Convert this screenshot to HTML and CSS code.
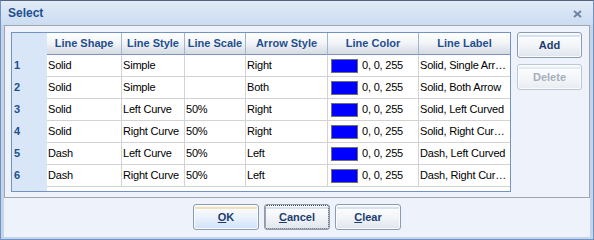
FILE: index.html
```html
<!DOCTYPE html>
<html lang="en">

<head>
  <meta charset="UTF-8">
  <title>Select</title>
  <link rel="stylesheet" href="styles.css">
</head>

<body>

  <div class="window">
    <div class="titlebar">
      <span class="title">Select</span>
      <span class="close">
        <svg width="9" height="8" viewBox="0 0 9 8">
          <path d="M1 1 L8 7 M8 1 L1 7" stroke="#6f84a3" stroke-width="2" fill="none" />
        </svg>
      </span>
    </div>

    <div class="frame">
      <div class="panel">
        <div class="grid">
          <div class="row head">
            <div class="cell num"></div>
            <div class="cell">Line Shape</div>
            <div class="cell">Line Style</div>
            <div class="cell">Line Scale</div>
            <div class="cell">Arrow Style</div>
            <div class="cell">Line Color</div>
            <div class="cell">Line Label</div>
          </div>
          <div class="row">
            <div class="cell num">1</div>
            <div class="cell">Solid</div>
            <div class="cell">Simple</div>
            <div class="cell"></div>
            <div class="cell">Right</div>
            <div class="cell color"><span class="swatch"></span>0, 0, 255</div>
            <div class="cell label">Solid, Single Arrow</div>
          </div>
          <div class="row">
            <div class="cell num">2</div>
            <div class="cell">Solid</div>
            <div class="cell">Simple</div>
            <div class="cell"></div>
            <div class="cell">Both</div>
            <div class="cell color"><span class="swatch"></span>0, 0, 255</div>
            <div class="cell label">Solid, Both Arrow</div>
          </div>
          <div class="row">
            <div class="cell num">3</div>
            <div class="cell">Solid</div>
            <div class="cell">Left Curve</div>
            <div class="cell">50%</div>
            <div class="cell">Right</div>
            <div class="cell color"><span class="swatch"></span>0, 0, 255</div>
            <div class="cell label">Solid, Left Curved</div>
          </div>
          <div class="row">
            <div class="cell num">4</div>
            <div class="cell">Solid</div>
            <div class="cell">Right Curve</div>
            <div class="cell">50%</div>
            <div class="cell">Right</div>
            <div class="cell color"><span class="swatch"></span>0, 0, 255</div>
            <div class="cell label">Solid, Right Curved</div>
          </div>
          <div class="row">
            <div class="cell num">5</div>
            <div class="cell">Dash</div>
            <div class="cell">Left Curve</div>
            <div class="cell">50%</div>
            <div class="cell">Left</div>
            <div class="cell color"><span class="swatch"></span>0, 0, 255</div>
            <div class="cell label">Dash, Left Curved</div>
          </div>
          <div class="row">
            <div class="cell num">6</div>
            <div class="cell">Dash</div>
            <div class="cell">Right Curve</div>
            <div class="cell">50%</div>
            <div class="cell">Left</div>
            <div class="cell color"><span class="swatch"></span>0, 0, 255</div>
            <div class="cell label">Dash, Right Curved</div>
          </div>
        </div>

        <div class="side">
          <button class="btn">Add</button>
          <button class="btn" disabled>Delete</button>
        </div>
      </div>

      <div class="footer">
        <button class="btn default"><u>O</u>K</button>
        <button class="btn focus"><u>C</u>ancel</button>
        <button class="btn"><u>C</u>lear</button>
      </div>
    </div>
  </div>

</body>
</html>
```

FILE: styles.css
```css
body {
  margin: 0;
  font-family: 'Liberation Sans', Arial, sans-serif;
  font-size: 11px;
  background-color: #fff;
}

.window {
  width: 594px;
  height: 240px;
  box-sizing: border-box;
  border: 1px solid #7192c2;
  border-top-color: #56627a;
  background-color: #c3d5ed;
}

.titlebar {
  height: 24px;
  display: flex;
  align-items: center;
  justify-content: space-between;
  padding: 0 11px 0 7px;
  background: linear-gradient(#e2ebf7, #d6e3f4 50%, #cbdcf2);
}

.title {
  font-size: 12px;
  font-weight: bold;
  color: #1f4f8f;
}

.close {
  display: flex;
  margin-top: 2px;
}

.frame {
  padding: 0 3px 2px;
}

.panel {
  height: 173px;
  box-sizing: border-box;
  display: flex;
  gap: 6px;
  padding: 6px 7px 5px 6px;
  border: 1px solid #a3a7ad;
  background-color: #eef3fb;
}

.grid {
  width: 500px;
  height: 160px;
  box-sizing: border-box;
  border: 1px solid #7393c2;
  background: linear-gradient(to right, #d8e6f8 35px, #fff 35px);
}

.row {
  display: grid;
  grid-template-columns: 35px 75px 63px 61px 82px 91px 91px;
  height: 22px;
}

.cell {
  box-sizing: border-box;
  height: 22px;
  line-height: 21px;
  padding: 0 1px;
  letter-spacing: -0.2px;
  white-space: nowrap;
  overflow: hidden;
  text-overflow: ellipsis;
  color: #000;
  border-right: 1px solid #d3d3d3;
  border-bottom: 1px solid #d3d3d3;
}

.cell:last-child {
  border-right: none;
}

.cell.label {
  padding-right: 3px;
}

.cell.num {
  border: none;
  font-weight: bold;
  letter-spacing: 0;
  color: #1f4f8f;
  padding-left: 2px;
}

.head .cell {
  font-weight: bold;
  letter-spacing: 0;
  color: #1f4f8f;
  text-align: center;
  background: linear-gradient(#fff, #f3f5f8 45%, #d5dbe3);
  border-right-color: #a2b6d3;
  border-bottom-color: #7c96bd;
}

.head .cell.num {
  background: none;
}

.head .cell:last-child {
  border-right: none;
}

.cell.color {
  display: flex;
  align-items: center;
  gap: 4px;
  padding-left: 3px;
}

.swatch {
  width: 27px;
  height: 14px;
  box-sizing: border-box;
  border: 1px solid #707070;
  background-color: #0000ff;
  flex-shrink: 0;
}

.side {
  display: flex;
  flex-direction: column;
  gap: 6px;
}

.btn {
  width: 65px;
  height: 26px;
  padding: 0;
  font-family: 'Liberation Sans', Arial, sans-serif;
  font-size: 11px;
  font-weight: bold;
  color: #1c3d6e;
  border: 1px solid #8c9bb0;
  border-radius: 3px;
  box-shadow: inset 0 0 0 1px #fbfcfe;
  background: linear-gradient(#f6f8fb 0, #f6f8fb 2px, #d6e2f0 2px, #d6e2f0 4px, #fbfcfe 4px, #f1f4f8 55%, #dfe5ee 100%);
  cursor: pointer;
}

.btn u {
  text-decoration: underline;
}

.btn:disabled {
  color: #a5afbd;
  border-color: #bcc7d5;
  background: linear-gradient(#f8fafc 0, #f8fafc 2px, #e3eaf3 2px, #e3eaf3 4px, #fbfcfe 4px, #f4f6f9 55%, #e8ecf2 100%);
}

.footer {
  height: 39px;
  box-sizing: border-box;
  display: flex;
  justify-content: center;
  gap: 5px;
  padding-top: 6px;
  background-color: #eef3fb;
}

.footer .btn {
  width: 66px;
}

.btn.default {
  background: linear-gradient(#f7f4ea 0, #f7f4ea 2px, #efe3bd 2px, #efe3bd 4px, #fafbfd 4px, #eaf2fc 50%, #cfe2fa 100%);
}

.btn.focus {
  outline: 1px dotted #4a4a4a;
  outline-offset: -2px;
}
```
